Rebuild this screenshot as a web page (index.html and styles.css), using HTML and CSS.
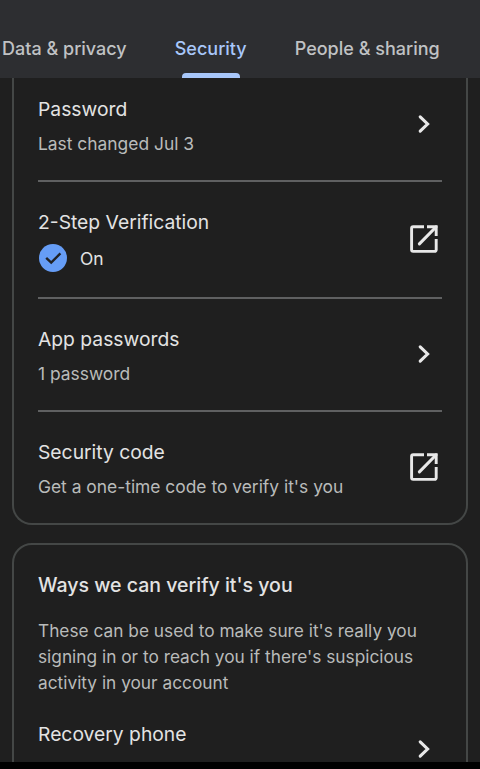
FILE: index.html
```
<!DOCTYPE html>
<html lang="en">
<head>
<meta charset="utf-8">
<title>Security</title>
<link rel="stylesheet" href="styles.css">
</head>
<body>
<svg width="0" height="0" class="defs">
  <symbol id="chevron" viewBox="0 0 36 36"><path d="M14.2 10.8 21.6 18l-7.4 7.2" fill="none" stroke="currentColor" stroke-width="3.1" stroke-linecap="round"/></symbol>
  <symbol id="open" viewBox="0 0 36 36"><path d="M18 5.8H7.2a1.6 1.6 0 0 0-1.6 1.6v21.4a1.6 1.6 0 0 0 1.6 1.6h21.4a1.6 1.6 0 0 0 1.6-1.6V18M21 5.8h9.2V15" fill="none" stroke="currentColor" stroke-width="2.9"/><path d="M30 6 13.4 22.8" fill="none" stroke="currentColor" stroke-width="3.1" stroke-linecap="round"/></symbol>
</svg>
<div class="app">
  <nav class="tabs">
    <a class="tab">Data &amp; privacy</a>
    <a class="tab active">Security</a>
    <a class="tab">People &amp; sharing</a>
  </nav>
  <main class="content">
    <section class="card continued">
      <div class="row">
        <div class="text"><div class="title">Password</div><div class="sub">Last changed Jul 3</div></div>
        <svg class="icon"><use href="#chevron"/></svg>
      </div>
      <div class="row">
        <div class="text"><div class="title">2-Step Verification</div>
          <div class="status"><svg class="check" viewBox="0 0 28 28"><circle cx="14" cy="14" r="14" fill="#669df6"/><path d="m7.2 13.8 5 4.8 9.2-9.2" fill="none" stroke="#202124" stroke-width="2.4"/></svg>On</div></div>
        <svg class="icon"><use href="#open"/></svg>
      </div>
      <div class="row">
        <div class="text"><div class="title">App passwords</div><div class="sub">1 password</div></div>
        <svg class="icon"><use href="#chevron"/></svg>
      </div>
      <div class="row">
        <div class="text"><div class="title">Security code</div><div class="sub">Get a one-time code to verify it's you</div></div>
        <svg class="icon"><use href="#open"/></svg>
      </div>
    </section>
    <section class="card">
      <h2>Ways we can verify it's you</h2>
      <p>These can be used to make sure it's really you signing in or to reach you if there's suspicious activity in your account</p>
      <div class="row">
        <div class="text"><div class="title">Recovery phone</div></div>
        <svg class="icon"><use href="#chevron"/></svg>
      </div>
    </section>
  </main>
</div>
</body>
</html>
```
FILE: styles.css
```
* { box-sizing: border-box; }
body {
  margin: 0;
  background: #000;
  color: #e3e3e3;
  font-family: Inter, Roboto, sans-serif;
}
.defs { display: none; }
.app {
  display: flex;
  flex-direction: column;
  height: 769px;
  padding-bottom: 7px;
  overflow: hidden;
}
.tabs {
  display: flex;
  flex: none;
  gap: 48px;
  height: 78px;
  padding: 20px 0 0 2px;
  background: #2d2e31;
  color: #c0c2c4;
  font-size: 18px;
  font-weight: 500;
  line-height: 58px;
  white-space: nowrap;
}
.tab {
  display: flex;
  flex-direction: column;
  align-items: center;
}
.tab.active { color: #a8c7fa; }
.tab.active::after {
  content: "";
  width: 58px;
  height: 5px;
  margin-top: -5px;
  border-radius: 4px 4px 0 0;
  background: #a8c7fa;
}
.content {
  flex: 1;
  min-height: 0;
  overflow: hidden;
  padding: 0 12px;
  background: #1f1f1f;
}
.card {
  margin-bottom: 18px;
  padding: 0 24px;
  border: 2px solid #444746;
  border-radius: 20px;
}
.card.continued {
  margin-top: -9px;
  border-top: 0;
  border-radius: 0 0 20px 20px;
}
.row {
  display: flex;
  align-items: center;
  min-height: 113px;
  border-bottom: 2px solid #5f6061;
}
.row:last-child {
  min-height: 111px;
  border-bottom: 0;
}
.text {
  flex: 1;
  align-self: flex-start;
  padding: 27px 0 23px;
}
.title {
  font-size: 19.3px;
  line-height: 26px;
}
.sub {
  margin-top: 9px;
  color: #b9bbba;
  font-size: 17.4px;
  line-height: 26px;
}
.status {
  display: flex;
  align-items: center;
  gap: 13px;
  height: 30px;
  margin: 8px 0 1px 1px;
  font-size: 17.4px;
}
.check { width: 28px; height: 28px; }
.icon {
  flex: none;
  width: 36px;
  height: 36px;
  margin-bottom: 2px;
  color: #e8e8e8;
}
h2 {
  margin: 27px 0 20px;
  font-size: 19.5px;
  font-weight: 500;
  line-height: 26px;
}
p {
  margin: 0 0 -2px;
  color: #b9bbba;
  font-size: 17.3px;
  line-height: 26px;
}
```
